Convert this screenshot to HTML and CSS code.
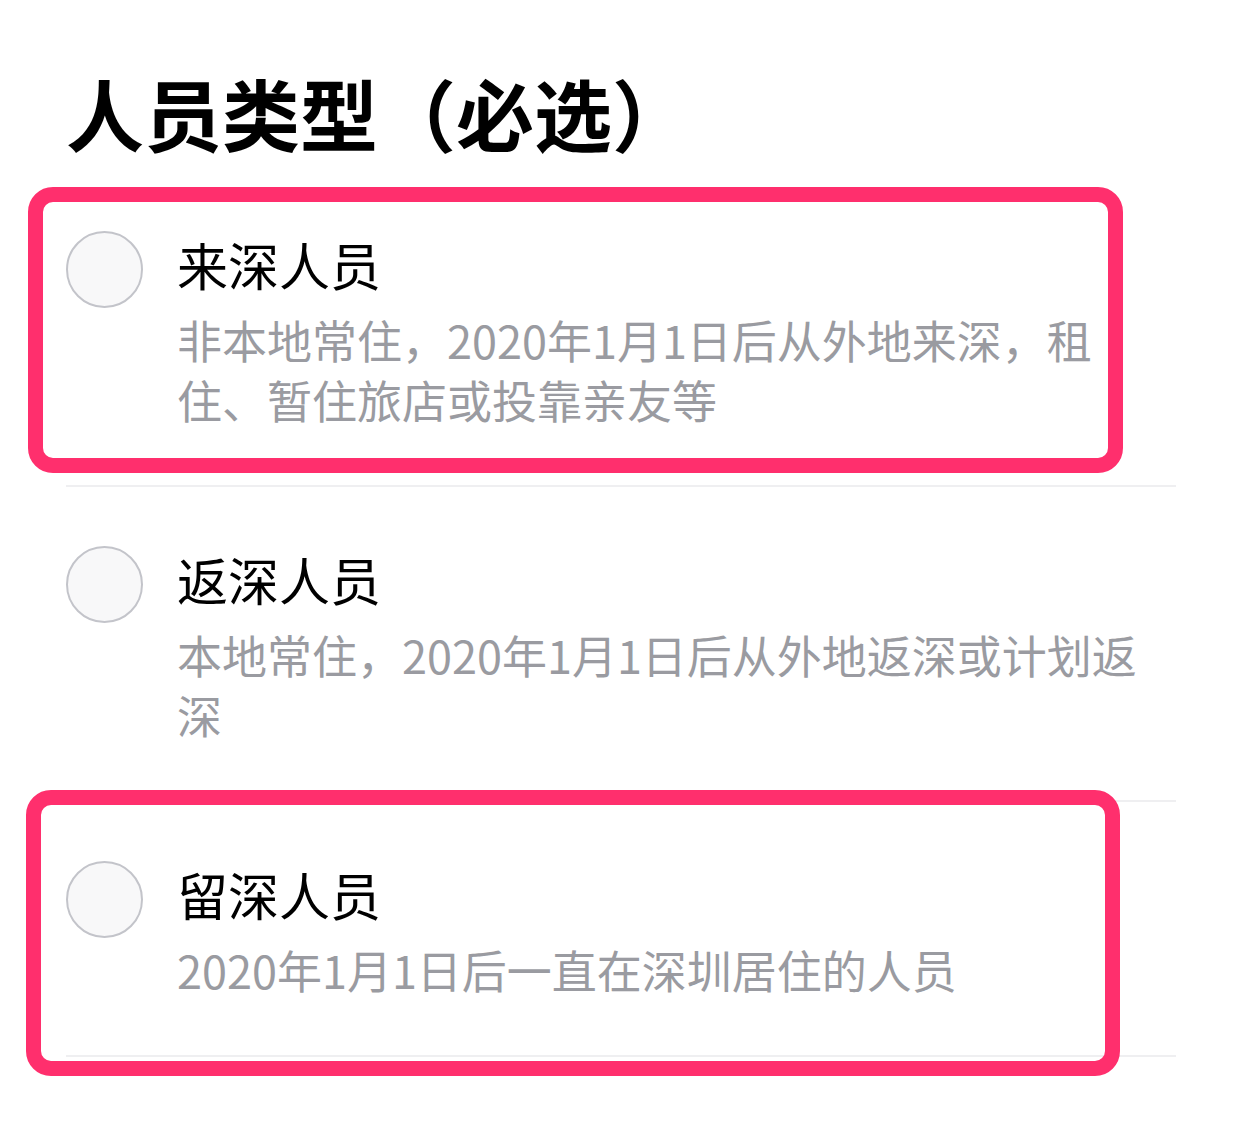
FILE: index.html
```html
<!DOCTYPE html>
<html lang="zh-CN">
<head>
    <meta charset="utf-8">
    <meta name="viewport" content="width=device-width, initial-scale=1.0">
    <title>人员类型</title>
    <link rel="stylesheet" href="styles.css">
</head>

<body>
    <main class="page">
        <h1 class="titel">人员类型（必选）</h1>

        <ul class="valg">
            <li class="valg-item">
                <span class="radio"></span>
                <div class="tekst">
                    <h2>来深人员</h2>
                    <p>非本地常住，2020年1月1日后从外地来深，租住、暂住旅店或投靠亲友等</p>
                </div>
                <div class="markering mark-1"></div>
            </li>
            <li class="valg-item">
                <span class="radio"></span>
                <div class="tekst">
                    <h2>返深人员</h2>
                    <p>本地常住，2020年1月1日后从外地返深或计划返深</p>
                </div>
            </li>
            <li class="valg-item">
                <span class="radio"></span>
                <div class="tekst">
                    <h2>留深人员</h2>
                    <p>2020年1月1日后一直在深圳居住的人员</p>
                </div>
                <div class="markering mark-3"></div>
            </li>
        </ul>
    </main>
</body>
</html>
```

FILE: styles.css
```css
body {
    margin: 0;
    background-color: #fff;
    font-family: "Noto Sans CJK SC", "Noto Sans", sans-serif;
}

.page {
    padding: 67px 66px 60px;
}

.titel {
    margin: 0 0 14px;
    font-size: 78px;
    line-height: 91px;
    font-weight: bold;
    color: #000;
}

.valg {
    list-style: none;
    margin: 0;
    padding: 0;
}

.valg-item {
    position: relative;
    display: flex;
    align-items: flex-start;
    gap: 34px;
    padding: 59px 32px 55px 0;
    border-bottom: 2px solid #efeff1;
}

.radio {
    flex: none;
    width: 77px;
    height: 77px;
    box-sizing: border-box;
    border: 2.5px solid #c3c4ca;
    border-radius: 50%;
    background-color: #f8f8f9;
}

.tekst {
    flex: 1;
}

.tekst h2 {
    margin: 0 0 12px;
    font-size: 51px;
    line-height: 67px;
    font-weight: normal;
    color: #000;
}

.tekst p {
    margin: 0;
    font-size: 45px;
    line-height: 60px;
    color: #9a9ba1;
}

/* roede markeringer lagt oven paa */
.markering {
    position: absolute;
    box-sizing: border-box;
    height: 286px;
    border: 15px solid #ff2f6d;
    border-radius: 25px;
    pointer-events: none;
}

.mark-1 {
    top: 15px;
    left: -38px;
    width: 1095px;
}

.mark-3 {
    top: -12px;
    left: -40px;
    width: 1094px;
}
```
